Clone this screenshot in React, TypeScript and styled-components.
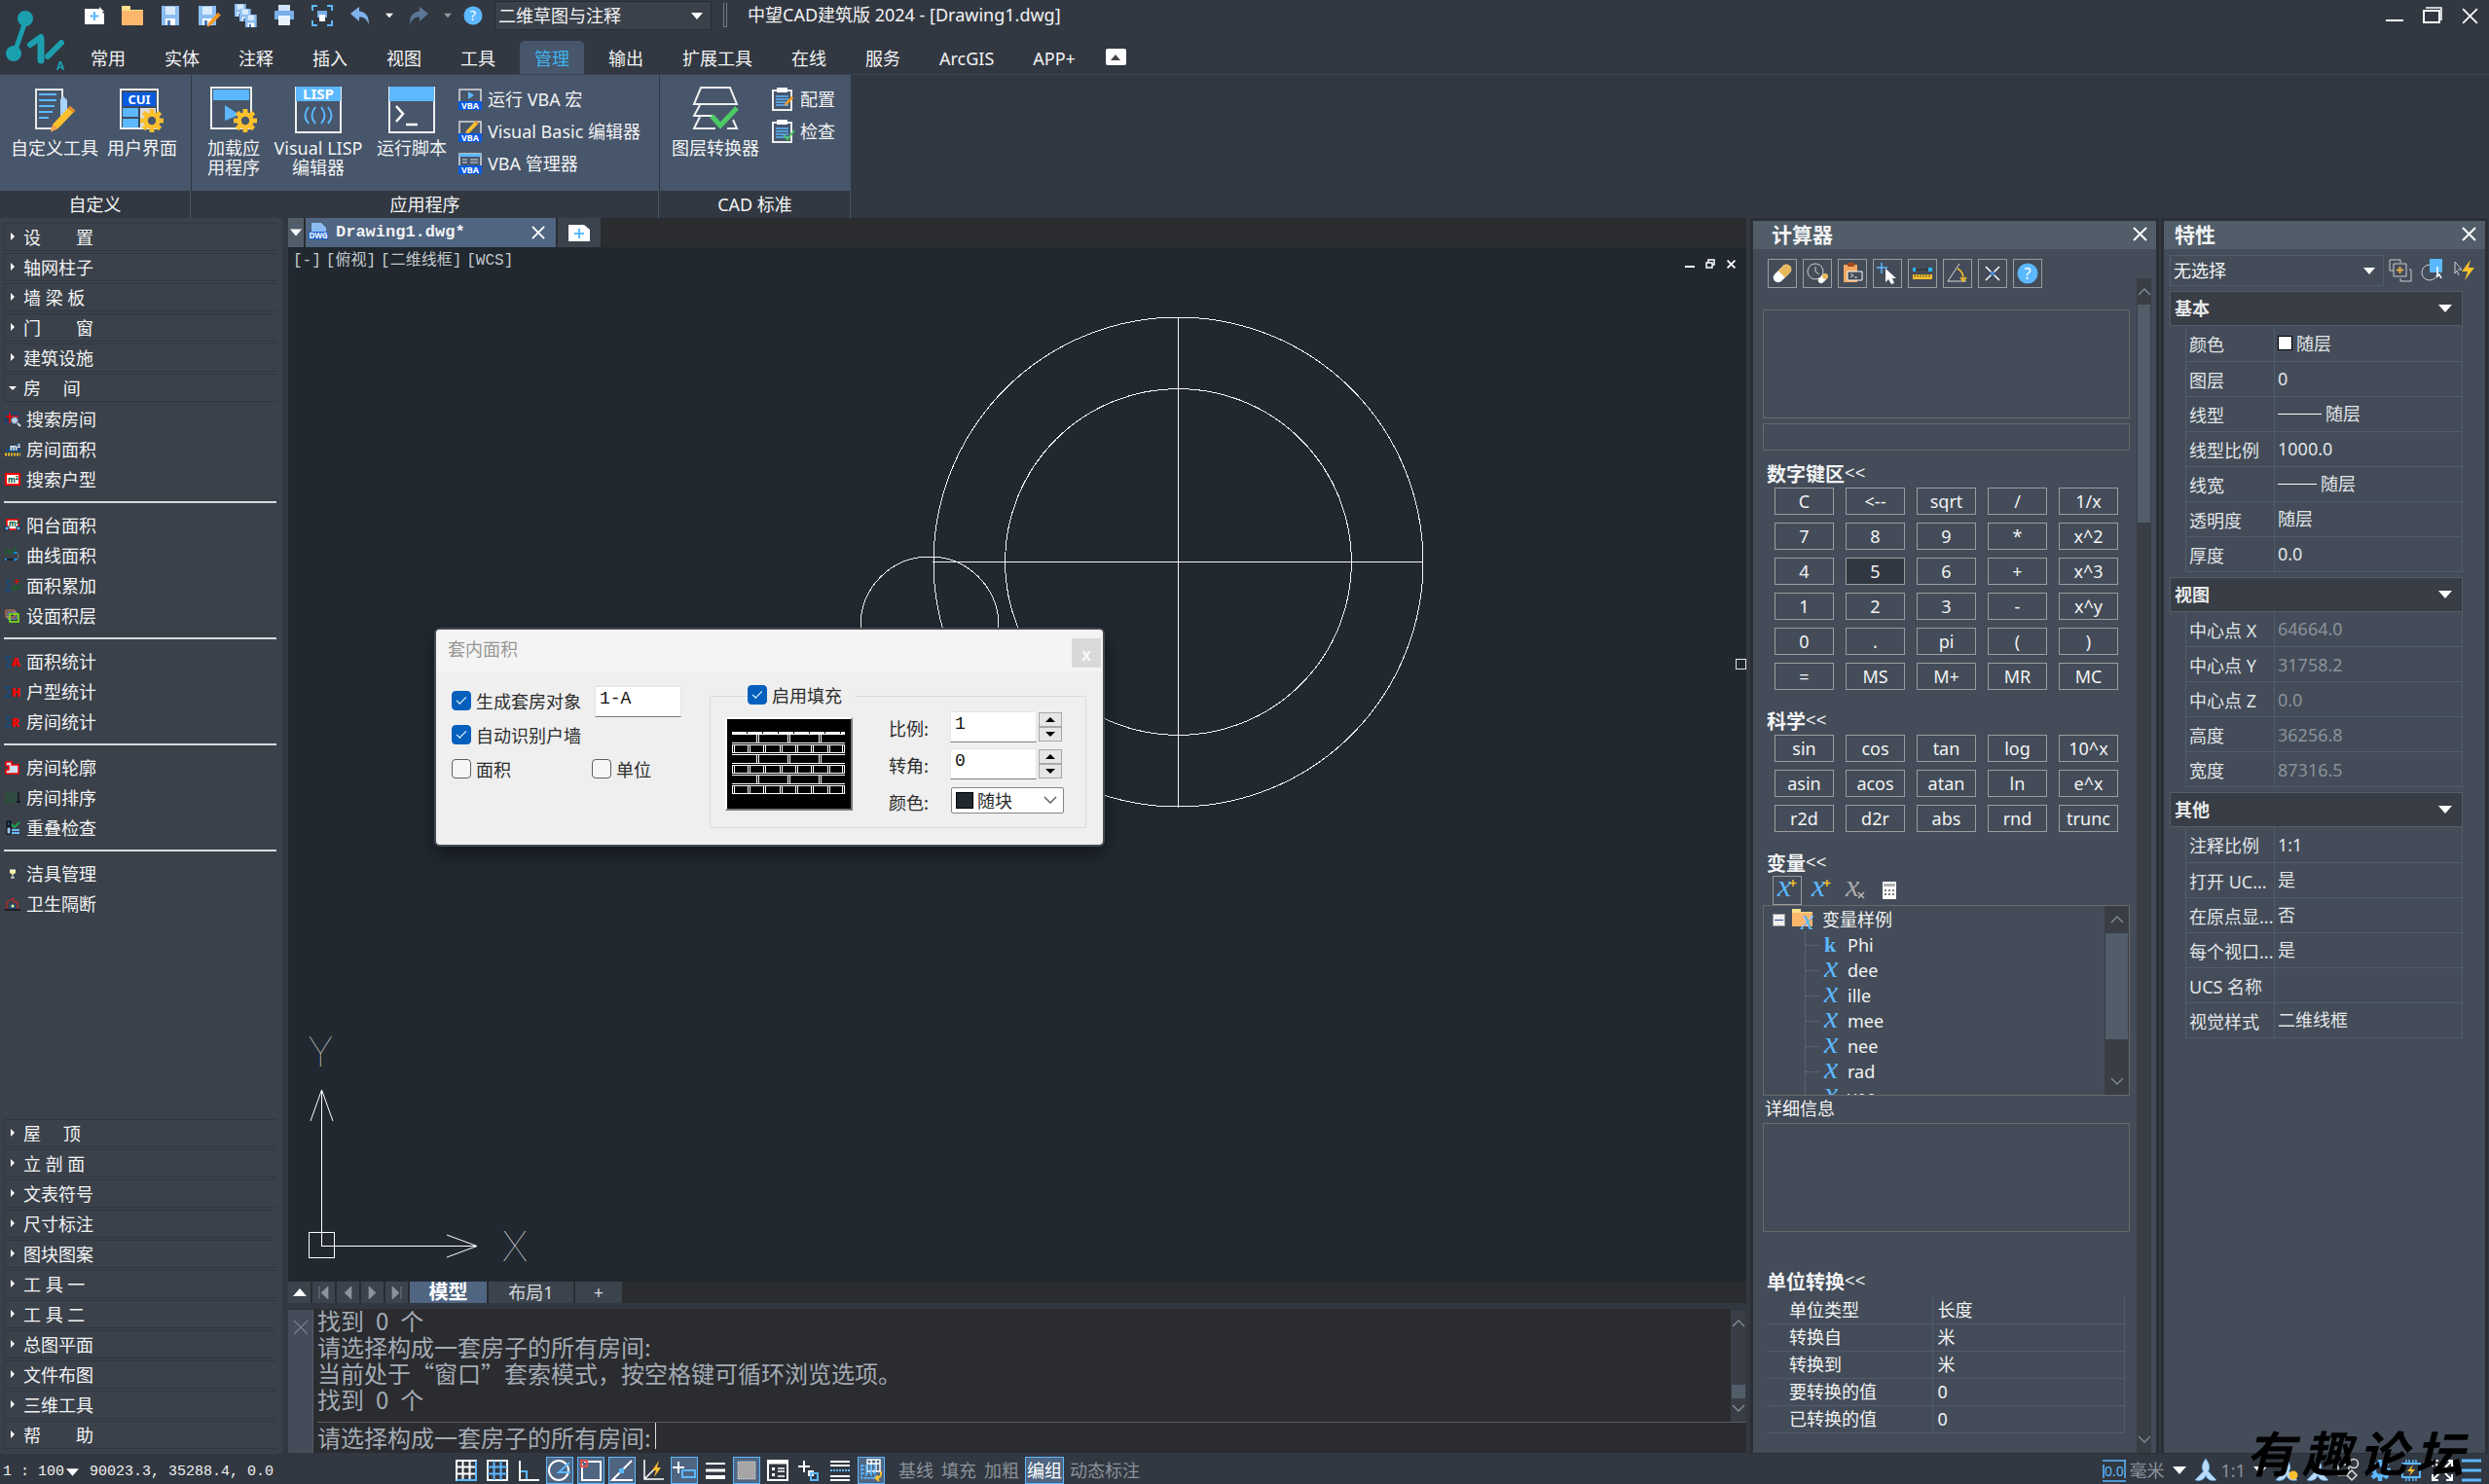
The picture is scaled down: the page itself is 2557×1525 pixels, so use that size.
import React from "react";
import styled, { createGlobalStyle, css } from "styled-components";

const ui = `"Noto Sans", "Noto Sans CJK SC", sans-serif`;
const song = `"Liberation Mono", "Noto Sans CJK SC", monospace`;

const c = {
  chrome: "#323841",
  ribbon: "#47566b",
  side: "#3a414a",
  panel: "#434c58",
  title: "#515d68",
  dark: "#2b2c30",
  edge: "#2b2e34",
  canvas: "#212830",
  blue: "#5cb8ff",
  line: "#515d68",
  text: "#f2f3f4",
  dim: "#8b929b",
  yellow: "#fbc02d",
};

const Global = createGlobalStyle`
  * { box-sizing: border-box; }
  body { margin: 0; background: ${c.chrome}; color: ${c.text}; font: 18px/20px ${ui}; overflow: hidden; }
  button, input, select { font: inherit; color: inherit; margin: 0; padding: 0; border: 0; background: none; border-radius: 0; }
  svg { display: block; flex: none; overflow: visible; }
  h2, h3, ul, fieldset { margin: 0; padding: 0; border: 0; font: inherit; }
  ul { list-style: none; }
  table { border-collapse: collapse; }
`;

/* ---------- frame ---------- */
const App_ = styled.div`display: flex; flex-direction: column; height: 100vh;`;
const Body = styled.div`display: flex; flex: 1; min-height: 0; padding-right: 1px;`;
const Center = styled.main`display: flex; flex-direction: column; flex: 1; min-width: 0; margin: 0 4px 0 6px;`;

/* ---------- header ---------- */
const Header = styled.header`display: flex; height: 76px;`;
const LogoBtn = styled.button`width: 72px; background: #303740; display: grid; place-items: center;`;
const HeadCol = styled.div`flex: 1; padding-left: 5px;`;
const TitleRow = styled.div`display: flex; height: 42px; align-items: flex-start;`;
const Quick = styled.button<{ $w?: number }>`width: ${p => p.$w ?? 39}px; height: 32px; display: grid; place-items: center;`;
const Combo = styled.div<{ $w?: string }>`
  position: relative; width: ${p => p.$w ?? "auto"};
  select { appearance: none; width: 100%; height: 100%; padding-left: 3px; outline: none; }
  &::after { content: ""; position: absolute; right: 8px; top: 50%; margin-top: -3px; border: 6px solid transparent; border-top: 7px solid #fff; border-bottom: 0; pointer-events: none; }
`;
const WorkCombo = styled(Combo)`height: 30px; margin: 1px 12px 0 6px; border: 1px solid #262b31; background: #3a414a;`;
const Grip = styled.div`width: 4px; height: 25px; margin: 3px 21px 0 0; border: 1px solid #757a80; border-top: 0;`;
const AppTitle = styled.div`flex: 1; line-height: 30px;`;
const WinBtns = styled.div`display: flex;`;
const Tabs = styled.nav`display: flex; gap: 10px; height: 34px; padding-left: 1px;`;
const Tab = styled.button<{ $on?: boolean }>`
  height: 34px; padding: 2px 15px 0; border-radius: 5px 5px 0 0; white-space: nowrap;
  ${p => p.$on && css`background: ${c.ribbon}; color: #3fb4f0;`}
`;
const Collapse = styled.button`
  width: 21px; height: 17px; margin: 8px 0 0 6px; background: #fff; border-radius: 2px; display: grid; place-items: center;
`;

const Ribbon = styled.div`display: flex; height: 148px; border-top: 1px solid #3c4653;`;
const Group = styled.section<{ $w: number }>`width: ${p => p.$w}px; display: flex; flex-direction: column; border-right: 1px solid ${c.chrome}; background: ${c.ribbon};`;
const GroupBody = styled.div`display: flex; flex: 1; padding: 12px 0 0 11px;`;
const GroupName = styled.h2`height: 28px; line-height: 29px; text-align: center; background: ${c.chrome}; border-right: 1px solid ${c.ribbon};`;
const Big = styled.button<{ $w: number }>`
  width: ${p => p.$w}px; height: 100px; display: flex; flex-direction: column; align-items: center; gap: 5px; white-space: nowrap;
`;
const SmallCol = styled.div<{ $gap: number }>`display: flex; flex-direction: column; padding-left: ${p => p.$gap}px;`;
const Small = styled.button`display: flex; align-items: center; gap: 6px; height: 33px; padding-bottom: 8px; white-space: nowrap;`;

/* ---------- left menu ---------- */
const Side = styled.nav`width: 290px; background: ${c.side}; padding: 5px 6px 3px 4px; display: flex; flex-direction: column;`;
const Fold = styled.button<{ $open?: boolean }>`
  display: flex; align-items: center; width: 280px; height: 29px; margin-bottom: 2px; padding: 0 0 0 19px !important; white-space: pre; position: relative;
  border: 1px solid #313740 !important; border-right: 0 !important;
  &::before { content: ""; position: absolute; left: 6px; top: 9px; border: 4px solid transparent; border-left-color: #fff; border-right: 0;
    ${p => p.$open && css`left: 4px; top: 12px; border: 4px solid transparent; border-top-color: #fff; border-bottom: 0;`} }
`;
const Item = styled.button`display: flex; align-items: center; gap: 6px; height: 31px; padding-left: 1px; width: 280px;`;
const Rule = styled.hr`width: 280px; height: 2px; margin: 7px 0; border: 0; background: #d8dbde;`;
const Spacer = styled.div`flex: 1;`;

/* ---------- drawing area ---------- */
const DocTabs = styled.div`display: flex; height: 30px; background: ${c.dark}; gap: 2px;`;
const DocList = styled.button`width: 16px; background: ${c.title}; display: grid; place-items: center;`;
const DocTab = styled.div`
  width: 257px; background: #4f6582; display: flex; align-items: center; gap: 8px; padding: 0 11px 0 3px; font: bold 17px/28px ${song};
  span { flex: 1; }
`;
const NewTab = styled.button`width: 44px; background: #3b434d; display: grid; place-items: center;`;
const Canvas = styled.div`position: relative; flex: 1; min-height: 0; background: ${c.canvas}; overflow: hidden;`;
const Drawing = styled.svg`position: absolute; inset: 0; width: 100%; height: 100%; fill: none; stroke: #f4f4f4; shape-rendering: crispEdges;`;
const Ucs = styled.svg`position: absolute; left: 16px; bottom: 16px; fill: none; stroke: #fff;
  text { fill: #fff; stroke: none; font: 100 43px Lato, sans-serif; }`;
const ViewBar = styled.div`position: relative; display: flex; gap: 5px; padding: 3px 8px 0 5px; font: 16px/20px ${song}; color: #c4c8cc;`;
const MdiBtns = styled.div`display: flex; margin: 6px 0 0 auto; gap: 5px; height: 16px; button { width: 16px; display: grid; place-items: center; }`;
const PickBox = styled.div`position: absolute; right: 0; top: 423px; width: 11px; height: 11px; border: 1px solid #e8e8e8;`;

const LayoutTabs = styled.div`display: flex; gap: 2px; height: 22px; background: ${c.dark};`;
const Arrow = styled.button`width: 23px; background: #3b434d; display: grid; place-items: center;`;
const LayoutTab = styled.button<{ $w: number; $on?: boolean }>`
  width: ${p => p.$w}px; font-size: 18px; line-height: 20px; background: #3b434d; color: #d5d8db;
  ${p => p.$on && css`background: #4f6582; color: #fff; font-weight: bold; font-size: 20px;`}
`;
const Command = styled.section`display: flex; height: 148px; margin: 6px 0 1px; background: ${c.dark}; border-top: 1px solid ${c.edge};
  font: 24px/27px "Noto Sans CJK SC", sans-serif; color: #a3abb4;`;
const CommandGrip = styled.div`width: 26px; background: #444b59; border-right: 1px solid #535b68; padding: 2px 5px;`;
const CommandCol = styled.div`flex: 1; display: flex; flex-direction: column; padding-left: 4px;`;
const History = styled.div`display: flex; height: 116px; border-bottom: 1px solid #55585c; ul { flex: 1; margin-top: -3px; }`;
const Line = styled.li`display: flex; gap: 12px;`;
const Prompt = styled.div`display: flex; align-items: stretch; flex: 1;
  label { line-height: 30px; }
  input { flex: 1; height: 27px; border-left: 1px solid #ddd; outline: none; margin-left: 4px; }`;

/* ---------- dialog ---------- */
const Dialog = styled.section`
  position: absolute; left: 152px; top: 393px; width: 685px; height: 221px; border-radius: 4px; overflow: hidden;
  background: #efefef; color: #2c2c2c; box-shadow: 0 0 0 2px #454b52, 0 8px 20px #0008; font: 18px/20px "Noto Sans CJK SC", sans-serif;
`;
const DlgTitle = styled.div`display: flex; justify-content: space-between; height: 43px; padding: 9px 2px 0 12px; background: #f4f4f4; color: #979797;
  button { width: 30px; height: 30px; background: #d9d9d9; color: #f8f8f8; font-weight: bold; }
  h2 { line-height: 21px; }`;
const DlgBody = styled.div`display: flex; padding: 12px 16px 0;`;
const DlgLeft = styled.div`width: 265px; display: grid; grid-template-columns: 144px 1fr; grid-template-rows: 36px 34px 36px; align-items: center;`;
const Check = styled.label<{ $wide?: boolean }>`
  display: flex; align-items: center; gap: 5px; white-space: nowrap; ${p => p.$wide && css`grid-column: span 2;`}
  input { appearance: none; width: 20px; height: 20px; border: 1px solid #5f5f5f; border-radius: 4px; background: #f6f6f6; display: grid; place-items: center; }
  input:checked { background: #0560bd; border-color: #0560bd; }
  input:checked::before { content: ""; width: 9px; height: 4px; margin-bottom: 3px; border: solid #fff; border-width: 0 0 1px 1px; transform: rotate(-45deg); }
`;
const Box = styled.input`
  width: 89px; height: 32px; padding: 0 4px 6px !important; background: #fff; border: 1px solid #e4e4e4 !important; border-bottom-color: #7d7d7d !important; outline: none;
  font: 18px/20px ${song} !important; color: #111 !important;
`;
const Code = styled.div`padding: 2px 0 0 3px;`;
const Fill = styled.fieldset`position: relative; width: 387px; height: 136px; margin-top: 13px; border: 1px solid #dadada !important; display: flex; padding: 0 0 0 15px !important;`;
const FillCheck = styled.div`position: absolute; left: 38px; top: -12px; padding-right: 14px; background: #efefef;`;
const Preview = styled.button`width: 131px; height: 96px; margin-top: 21px; background: #000; border: 2px solid #fff !important; border-right-color: #777 !important; border-bottom-color: #777 !important; padding: 0 5px;`;
const Fields = styled.div`margin: 15px 0 0 37px; display: grid; grid-template-columns: 63px 1fr; grid-auto-rows: 38px; align-items: start; label { padding-top: 7px; }`;
const Spin = styled.div`display: flex; gap: 2px;
  div { display: flex; flex-direction: column; padding-top: 1px; }
  button { width: 24px; height: 15px; border: 1px solid #a8a8a8; background: #e6e6e6; display: grid; place-items: center; }`;
const ColorPick = styled.div`position: relative; width: 116px; height: 27px; margin: 2px 0 0 1px; background: #fff; border: 1px solid #868686; border-radius: 2px;
  select { appearance: none; width: 100%; height: 24px; padding-left: 26px; outline: none; }
  i { position: absolute; left: 4px; top: 4px; width: 18px; height: 17px; background: ${c.canvas}; border: 1px solid #000; }
  svg { position: absolute; right: 7px; top: 9px; }`;

/* ---------- palettes ---------- */
const Palette = styled.aside<{ $w: number }>`width: ${p => p.$w}px; flex: none; background: ${c.panel}; border: 3px solid ${c.edge}; border-bottom-width: 1px; margin-right: ${p => (p.$w > 400 ? 2 : 0)}px; display: flex; flex-direction: column;`;
const PalTitle = styled.div<{ $pad: number }>`display: flex; justify-content: space-between; align-items: flex-start; height: 29px; flex: none; background: ${c.title}; padding: 0 9px 0 ${p => p.$pad}px;
  h2 { font: bold 21px/26px "Noto Sans CJK SC", sans-serif; }
  button { height: 26px; display: grid; place-items: center; }`;
const CalcBody = styled.div`display: flex; flex: 1; min-height: 0;`;
const CalcMain = styled.div`width: 394px; padding: 10px 7px 0 10px;`;
const Tools = styled.div`display: flex; gap: 6px; padding-left: 5px;`;
const Tool = styled.button<{ $flat?: boolean }>`width: 30px; height: 30px; border: 1px solid ${p => (p.$flat ? "transparent" : "#9b9d9f")}; display: grid; place-items: center;`;
const Display = styled.textarea<{ $top?: number; $h: number }>`display: block; width: 100%; height: ${p => p.$h}px; margin: ${p => p.$top ?? 0}px 0 0; padding: 0; background: none; border: 1px solid #68696a; resize: none; outline: none;`;
const Entry = styled.input`display: block; width: 100%; height: 28px; margin-top: 5px !important; border: 1px solid #68696a !important; outline: none;`;
const Head = styled.button<{ $top: number }>`display: flex; height: 26px; margin: ${p => p.$top}px 0 0 4px; font: bold 20px/26px "Noto Sans CJK SC", sans-serif; span { font: 18px/26px "Liberation Mono", monospace; }`;
const Keys = styled.div`display: grid; grid-template-columns: repeat(5, 61px); gap: 8px 12px; padding: 1px 0 0 12px;`;
const Key = styled.button<{ $on?: boolean }>`height: 28px; border: 1px solid #9b9d9f; background: ${p => (p.$on ? "#313740" : "none")};`;
const VarTools = styled.div`display: flex; gap: 5px; padding-left: 10px; height: 30px;`;
const Tree = styled.div`display: flex; height: 196px; border: 1px solid #68696a; overflow: hidden;`;
const TreeList = styled.ul`flex: 1; position: relative; padding: 1px 0 0 9px;
  &::before { content: ""; position: absolute; left: 42px; top: 26px; bottom: 0; border-left: 1px dotted #6b737d; }`;
const Root = styled.li`display: flex; align-items: center; gap: 7px; height: 26px;`;
const Leaf = styled.li`display: flex; align-items: center; height: 26px; padding-left: 34px; gap: 4px;
  &::before { content: ""; width: 14px; border-top: 1px dotted #6b737d; }
  span { margin-left: 3px; }`;
const Minus = styled.button`width: 13px; height: 13px; background: #f0f0f0; border: 1px solid #999 !important; display: grid; place-items: center; &::before { content: ""; width: 9px; height: 1px; background: #2a4fa0; }`;
const Caption = styled.div`padding: 3px 0 0 2px; height: 28px;`;
const Scroll = styled.div<{ $w: number; $top?: number }>`width: ${p => p.$w}px; margin-top: ${p => p.$top ?? 0}px; background: #393d45; display: flex; flex-direction: column; align-items: center; padding: 10px 1px;`;
const Thumb = styled.div<{ $h: number; $top: number }>`width: 100%; height: ${p => p.$h}px; margin: ${p => p.$top}px 0 auto; background: ${c.title};`;
const Units = styled.table`width: 367px; margin: 2px 0 0 5px; table-layout: fixed;
  th, td { height: 28px; padding: 0; text-align: left; font-weight: normal; border-bottom: 1px solid ${c.line}; }
  th { width: 169px; padding-left: 22px; }
  td { padding-left: 5px; border-left: 1px solid ${c.line}; border-right: 1px solid ${c.line}; }`;

const SelRow = styled.div`display: flex; align-items: center; gap: 9px; padding: 5px 9px 5px 6px; height: 43px;
  button { width: 24px; height: 24px; display: grid; place-items: center; }`;
const SelCombo = styled(Combo)`flex: 1; height: 32px; border: 1px solid ${c.line}; margin-right: -4px;`;
const Section = styled.section`margin: 0 23px 5px 6px;`;
const SecHead = styled.button`display: flex; justify-content: space-between; align-items: center; width: 100%; height: 36px; padding: 0 10px 0 4px !important; background: #393d45; border: 1px solid ${c.line} !important; font-weight: bold !important; color: #e8eaec;`;
const Props = styled.table`width: calc(100% - 16px); margin-left: 16px; table-layout: fixed; color: #e2e5e8;
  th, td { height: 36px; padding: 0 0 0 3px; text-align: left; font-weight: normal; border: 1px solid ${c.line}; border-top: 0; white-space: nowrap; }
  th { width: 91px; padding-top: 3px; }
  td { line-height: 22px; }
  td div { display: flex; align-items: center; gap: 4px; }`;
const Swatch = styled.i`width: 15px; height: 15px; background: #fff; border: 1px solid #000;`;
const Stroke = styled.i<{ $w: number }>`width: ${p => p.$w}px; height: 1px; background: #fff;`;
const Dim = styled.span`color: ${c.dim};`;

/* ---------- status bar ---------- */
const Status = styled.footer`position: relative; display: flex; align-items: center; height: 31px; padding: 3px 8px 0 3px; color: ${c.dim};`;
const Coords = styled.div`display: flex; align-items: center; width: 462px; padding-top: 3px; font: 15px/26px ${song}; color: #f0f0f0; white-space: pre; button { display: flex; align-items: center; gap: 2px; margin-right: 11px; }`;
const Toggle = styled.button<{ $on?: boolean }>`width: 28px; height: 28px; margin-right: 4px; display: grid; place-items: center; border: 1px solid transparent; ${p => p.$on && css`background: #4f6582; border-color: ${c.blue};`}`;
const Word = styled.button<{ $on?: boolean }>`height: 28px; padding: 0 1px; border: 1px solid transparent; ${p => p.$on && css`background: #4f6582; border-color: ${c.blue}; color: #fff;`}`;
const Words = styled.div`display: flex; padding-left: 8px; margin-right: auto; gap: 4px;`;
const Tray = styled.div`display: flex; align-items: center; gap: 8px; span { display: flex; align-items: center; gap: 4px; }`;
const Stamp = styled.div`position: absolute; right: 26px; bottom: 6px; display: flex; gap: 8px; font: italic bold 50px/56px "Noto Sans CJK SC", sans-serif; color: #000; pointer-events: none;`;

/* ---------- icons ---------- */
type IP = { w?: number; h?: number; vb?: string; children: React.ReactNode };
const I = ({ w = 24, h = w, vb, children }: IP) => (
  <svg width={w} height={h} viewBox={vb ?? `0 0 ${w} ${h}`} fill="none" aria-hidden="true">{children}</svg>
);
const Cross = ({ s = 15, k = 2, col = "#fff" }) => <I w={s} vb="0 0 15 15"><path d="M1 1 14 14M14 1 1 14" stroke={col} strokeWidth={k} /></I>;
const Down = ({ w = 14, col = "#fff" }) => <I w={w} h={8} vb="0 0 14 8"><path d="M0 0H14L7 8Z" fill={col} /></I>;
const Chev = ({ up = false, col = "#858d96" }) => <I w={12} h={7}><path d={up ? "M0 7 6 1 12 7" : "M0 0 6 6 12 0"} stroke={col} strokeWidth="1.3" /></I>;
const Disk = ({ x = 2, y = 2, s = 1 }) => (
  <g transform={`translate(${x} ${y}) scale(${s})`}><path d="M0 0H18V20H0Z" fill="#8cbdf2" /><path d="M4 1H14V9H4Z" fill="#d9eafc" /><path d="M4 13H14V20H4Z" fill="#fff" /><path d="M6 15h3v5H6Z" fill="#4577b5" /></g>
);
const HelpIc = ({ s = 22 }) => <I w={s} vb="0 0 22 22"><circle cx="11" cy="11" r="10.5" fill={c.blue} /><text x="11" y="16.5" textAnchor="middle" fontSize="16" fill="#fff" fontFamily="Noto Sans">?</text></I>;
const Gear = ({ x, y, r, col = c.yellow, hole }: { x: number; y: number; r: number; col?: string; hole: string }) => (
  <g transform={`translate(${x} ${y})`}>{[0, 45, 90, 135].map(a => <rect key={a} x={-r * 0.2} y={-r} width={r * 0.4} height={r * 2} fill={col} transform={`rotate(${a})`} />)}<circle r={r * 0.72} fill={col} /><circle r={r * 0.35} fill={hole} /></g>
);
const Undo = ({ flip = false, col = "#7fb2ea" }) => <I w={22} h={20}><g transform={flip ? "translate(22 0) scale(-1 1)" : ""}><path d="M1 8 10 1V5.500C17 6 20 11 20 19 17 13 15 11.500 10 11.500V16Z" fill={col} /></g></I>;
const Logo = () => (
  <I w={68} h={72}><g stroke="#1c9fae" strokeLinecap="round"><path d="M24 20 13 52" strokeWidth="5" /><path d="M40 38V60" strokeWidth="7" /><path d="M29 44 40 36" strokeWidth="6" /><path d="M47 56 61 42" strokeWidth="6" /></g><circle cx="24" cy="17" r="8" fill="#1c9fae" /><circle cx="12" cy="53" r="8" fill="#1c9fae" /><text x="56" y="70" fontSize="12" fontWeight="bold" fill="#1c9fae" fontFamily="Noto Sans">A</text></I>
);
const Pencil = ({ x, y, s = 1, col = c.yellow }: { x: number; y: number; s?: number; col?: string }) => (
  <g transform={`translate(${x} ${y}) scale(${s})`}><path d="M0 24 2 17 18 0 23 4 7 21Z" fill={col} /><path d="M0 24 2 17 7 21Z" fill="#f0a050" /><path d="M16 2 18 0 23 4 21 6Z" fill="#e08a2c" /></g>
);
const big = {
  tool: <I w={48}><path d="M32 12V3H5V43H22" stroke="#e8e8e8" strokeWidth="2" /><path d="M8 8H26M8 14H26M8 20H24M8 26H22M8 32H18" stroke={c.blue} strokeWidth="2" /><path d="M33 10 37 14V26L30 32V13Z" fill="#a8d4fa" /><g transform="translate(20 20)"><Pencil x={0} y={0} s={1.1} /></g></I>,
  cui: <I w={48}><path d="M2 3H40V43H2Z" fill="#3d4b5e" stroke="#eee" strokeWidth="2" /><path d="M4 6H38V20H4Z" fill="#0a5be0" /><text x="21" y="18" textAnchor="middle" fontSize="13" fontWeight="bold" fill="#fff" fontFamily="Noto Sans">CUI</text><path d="M4 22H20V31H4ZM4 33H20V42H4Z" fill={c.blue} /><path d="M22 22H38V42H22Z" fill="#ddd" /><Gear x={34} y={35} r={12} hole="#47566b" /></I>,
  load: <I w={48}><path d="M1 1H42V43H1Z" stroke="#eee" strokeWidth="2" /><path d="M3 3H40V14H3Z" fill={c.blue} /><path d="M15 19 30 29 15 35Z" fill={c.blue} /><Gear x={36} y={35} r={12} hole="#47566b" /></I>,
  lisp: <I w={48}><path d="M1 1H47V47H1Z" stroke="#eee" strokeWidth="2" /><path d="M1 0H47V15H1Z" fill={c.blue} /><text x="24" y="13" textAnchor="middle" fontSize="15" fontWeight="bold" fill="#fff" fontFamily="Noto Sans">LISP</text><path d="M14 21q-7 9 0 17M21 21q-7 9 0 17M27 21q7 9 0 17M34 21q7 9 0 17" stroke={c.blue} strokeWidth="2" /></I>,
  script: <I w={48}><path d="M1 1H47V47H1Z" stroke="#eee" strokeWidth="2" /><path d="M1 0H47V15H1Z" fill={c.blue} /><path d="M8 20 15 28 8 36M18 39H30" stroke="#fff" strokeWidth="2.500" /></I>,
  layer: <I w={48}><g stroke="#eee" strokeWidth="2"><path d="M9 1H39L46 18H2Z" /><path d="M8 19 2 30H22M8 31 2 43H24M36 43H46L42 34" /></g><path d="M20 30 29 40 46 22" stroke="#4ccb64" strokeWidth="5" /></I>,
};
const vba = (top: React.ReactNode) => <I w={24} h={22}><path d="M1 1H23V14H1Z" stroke="#ddd" strokeWidth="1.500" />{top}<path d="M0 13H24V22H0Z" fill="#0a5be0" /><text x="12" y="21" textAnchor="middle" fontSize="9" fontWeight="bold" fill="#fff" fontFamily="Noto Sans">VBA</text></I>;
const clip = (mark: React.ReactNode) => <I w={24}><path d="M2 3H21V23H2Z" stroke="#eee" strokeWidth="2" /><path d="M6 0H17V5H6Z" fill="#fff" /><path d="M5 9H18M5 12H18M5 15H18M5 18H18" stroke={c.blue} strokeWidth="1.500" />{mark}</I>;

const sum = (l: string) => <I w={16}><path d="M7 3H1L5 8 1 13H7" stroke="#174a7e" strokeWidth="1.500" /><text x="7" y="13" fontSize="12" fontWeight="900" fill="#f00" fontFamily="Noto Sans">{l}</text></I>;
const m2 = (x: number, y: number, f: string, s = 8) => <text x={x} y={y} fontSize={s} fontWeight="bold" fill={f} fontFamily="Noto Sans">m²</text>;
const sideIc: Record<string, React.ReactNode> = {
  搜索房间: <I w={16}><path d="M0 1H14V12H0Z" stroke="#174a7e" fill="#2b3c55" /><path d="M1 5H14M5 1V12" stroke="#f00" strokeWidth="1.500" /><circle cx="10" cy="9" r="3.500" fill="#b7d0e8" stroke="#667" /><path d="M13 12 16 15" stroke="#ddd" strokeWidth="2" /></I>,
  房间面积: <I w={16}><path d="M1 8 16 1V10H1Z" fill="#174a7e" />{m2(5, 9, "#fff")}<path d="M0 13H16" stroke="#e8b830" strokeWidth="3" strokeDasharray="2 1" /></I>,
  搜索户型: <I w={16}><path d="M1 2H15V13H1Z" fill="#fff" stroke="#f00" strokeWidth="2" />{m2(3, 11, "#053")}</I>,
  阳台面积: <I w={16}><path d="M2 2H14V12H2Z" fill="#fff" stroke="#f00" strokeWidth="1.500" />{m2(4, 9, "#053")}<path d="M0 9H4V13H0ZM12 9H16V13H12Z" fill="#6ab0f0" stroke="#123" /></I>,
  曲线面积: <I w={16}>{m2(0, 7, "#17622a", 9)}<path d="M1 12H11" stroke="#000" /><path d="M0 11h2v2H0ZM9 4h3v2H9ZM9 11h3v2H9Z" fill="#0a8cff" /><path d="M12 4q4 4 0 8" stroke="#ccc" strokeDasharray="1 1" /></I>,
  面积累加: <I w={16}><path d="M7 3H1L5 8 1 13H7" stroke="#174a7e" strokeWidth="1.500" />{m2(7, 13, "#17622a")}<path d="M12 1V6M10 3.500H15" stroke="#f00" /></I>,
  设面积层: <I w={16}><path d="M1 2H10V9H1Z" stroke="#f08050" /><path d="M3 4H12V11H3Z" stroke="#8fa0c0" /><path d="M5 6H14V14H5Z" stroke="#7cf010" strokeWidth="1.500" /></I>,
  面积统计: sum("A"), 户型统计: sum("H"), 房间统计: sum("R"),
  房间轮廓: <I w={16}><path d="M1 2H7V5H14V14H1V10H4V6H1Z" fill="#cfe2f7" stroke="#f00" strokeWidth="1.500" /></I>,
  房间排序: <I w={16}><text x="0" y="7" fontSize="7" fill="#17622a" fontFamily="Liberation Mono">001</text><text x="0" y="13" fontSize="7" fill="#17622a" fontFamily="Liberation Mono">002</text><path d="M14 2V13M12 11 14 13 16 11" stroke="#000" /></I>,
  重叠检查: <I w={16}><path d="M2 1H6V6H2Z" fill="#246" stroke="#000" /><path d="M2 7H6V14H2Z" fill="#9cc8f5" stroke="#000" /><path d="M7 4 10 7 15 2" stroke="#1c9f50" strokeWidth="2" /><path d="M7 10H15M7 13H15" stroke="#6ab8f5" strokeWidth="2" /></I>,
  洁具管理: <I w={16}><path d="M5 4H11V7L8 9 5 7Z" fill="#f5f0a0" /><path d="M5 4H11M8 9V12M6 12H10" stroke="#fff" /></I>,
  卫生隔断: <I w={16}><path d="M2 13V6L9 2V6H13V13" stroke="#d22" /><path d="M5 8H11V13H5Z" fill="#174a7e" /><circle cx="8" cy="10" r="1.500" fill="#ff8" /><path d="M0 14H16" stroke="#000" /></I>,
};

const Person = ({ dot = false }) => <I w={24}><path d="M12 0Q18 8 14.500 13L23 22Q14 24 12 17 10 24 1 22L9.500 13Q6 8 12 0Z" fill="#b9daf8" stroke={c.blue} strokeWidth=".6" />{dot && <circle cx="19" cy="17" r="4.500" fill={c.yellow} />}</I>;
const grid = (a: string, b: string) => <I w={22}><path d="M1 1H21V21H1Z" stroke={a} strokeWidth="2" /><path d="M7.500 1V21M14.500 1V21M1 7.500H21M1 14.500H21" stroke={b} strokeWidth="2" /></I>;
const W = "#fff";
const toggles: [string, boolean, React.ReactNode][] = [
  ["捕捉", false, <I w={22}><path d="M1 1H21V21H1ZM7.500 1V21M14.500 1V21M1 7.500H21M1 14.500H21" stroke={W} strokeWidth="2" /><path d="M21 1V21H1" stroke={c.blue} strokeWidth="2" /></I>],
  ["栅格", false, grid(W, c.blue)],
  ["正交", false, <I w={22}><path d="M2 1V21H22" stroke={W} strokeWidth="2" /><path d="M3 12H9V20" stroke={c.blue} strokeWidth="2" /></I>],
  ["极轴", true, <I w={24}><circle cx="11" cy="12" r="10" stroke={W} strokeWidth="2" /><path d="M22 4 11 14H23" stroke={c.blue} strokeWidth="2" /></I>],
  ["对象捕捉", true, <I w={24}><path d="M5 3H22V22H3V5" stroke={W} strokeWidth="2" /><path d="M2 2H8V8H2Z" stroke="#e05050" strokeWidth="2" /></I>],
  ["对象追踪", true, <I w={24}><path d="M23 22H2L22 2" stroke={W} strokeWidth="2" /><path d="M9 10H14V15H9Z" fill={c.blue} /></I>],
  ["动态 UCS", false, <I w={24}><path d="M3 1V21H23M3 21 15 9" stroke={W} strokeWidth="1.500" /><path d="M18 2 11 12H15L13 19 20 9H16Z" fill={c.yellow} /></I>],
  ["动态输入", true, <I w={24}><path d="M6 3V15M0 9H12" stroke={W} strokeWidth="2" /><path d="M10 12H23V19H10Z" stroke={c.blue} strokeWidth="2" /></I>],
  ["线宽", false, <I w={20}><path d="M0 3H20" stroke={W} strokeWidth="2" /><path d="M0 10H20" stroke={W} strokeWidth="3" /><path d="M0 17H20" stroke={W} strokeWidth="4" /></I>],
  ["透明度", true, <I w={20}><path d="M1 1H19V19H1Z" fill="#a5a5a5" stroke="#ddd" strokeDasharray="1 1" /></I>],
  ["快捷特性", false, <I w={22}><path d="M1 1H21V21H1Z" stroke={W} strokeWidth="2" /><path d="M1 3H21" stroke={W} strokeWidth="3" /><path d="M5 8h3v3H5ZM5 14h3v3H5Z" fill={W} /><path d="M11 9H18M11 12H18M11 17H18" stroke={W} strokeWidth="1.500" /></I>],
  ["循环选择", false, <I w={22}><path d="M6 1V13M0 7H12" stroke={W} strokeWidth="2" /><path d="M10 11H16V17H10Z" fill={W} /><path d="M13 14H20V21H13Z" stroke={c.blue} strokeWidth="2" /></I>],
  ["注释监视", false, <I w={22}><path d="M1 2H21M1 6H21M1 17H21M1 21H21" stroke={W} strokeWidth="2" /><path d="M1 11H21" stroke={c.blue} strokeDasharray="2 1" strokeWidth="2" /></I>],
  ["表格", true, <I w={24}><path d="M8 1H21V13H8ZM8 5H21M12 1V13M17 1V13" stroke={W} strokeWidth="1.500" /><path d="M2 7H16V20H2ZM2 11H16M2 15H16M7 7V20M12 7V20" stroke={c.blue} strokeWidth="1.500" strokeDasharray="3 1" /><path d="M22 13Q23 20 17 20L19 17M17 20 20 23" stroke={c.yellow} strokeWidth="2" /></I>],
];

const calcTools: [string, React.ReactNode][] = [
  ["清除", <I w={22}><g transform="rotate(-45 11 11)"><rect x="0" y="6" width="22" height="10" rx="5" fill={W} /><path d="M10 6H18Q22 7 22 11 22 15 18 16H10Z" fill="#e8b85c" /></g></I>],
  ["清除历史", <I w={22}><circle cx="9" cy="9" r="8" stroke="#ccc" /><path d="M9 4V9L13 12" stroke="#ccc" /><g transform="rotate(-45 17 16)"><rect x="11" y="13" width="11" height="6" rx="3" fill={W} /><rect x="17" y="13" width="6" height="6" rx="3" fill="#e8b85c" /></g></I>],
  ["粘贴到命令行", <I w={22}><path d="M2 2H16V20H2Z" fill="#f2a862" /><path d="M6 0H13V4H6Z" fill="#a54a1a" /><path d="M6 9H21V18H6Z" fill={c.panel} stroke={W} /><path d="M9 11 12 13 9 15M13 15H16" stroke="#ddd" /></I>],
  ["拾取坐标", <I w={22}><path d="M5 0V11M0 5H11" stroke={c.blue} strokeWidth="1.500" /><path d="M9 6V20L12 17 15 22 18 21 16 16H20Z" fill={W} /></I>],
  ["两点距离", <I w={22}><path d="M3 7H19" stroke="#333" strokeDasharray="2 1" strokeWidth="2" /><path d="M1 5H4V9H1ZM17 5H21V9H17Z" fill="#27b4ff" /><path d="M1 12H21V17H1Z" fill={c.yellow} /><path d="M3 12V15M6 12V15M9 12V15M12 12V15M15 12V15M18 12V15" stroke="#553" /></I>],
  ["两点角度", <I w={22}><path d="M13 1 1 19H20" stroke="#ddd" /><path d="M11 6Q17 9 17 17M14 15 17 19 20 15" stroke={c.yellow} strokeWidth="1.500" /></I>],
  ["交点", <I w={16}><path d="M1 1 15 15M15 1 1 15" stroke={W} strokeWidth="1.500" /><path d="M6 6H10V10H6Z" fill="#4a90d8" /></I>],
  ["帮助", <HelpIc />],
];
const VarX = ({ col = c.blue, l = "x", s = 32 }) => <text x="1" y="17" fontSize={s} fontStyle={l === "x" ? "italic" : "normal"} fontWeight={l === "k" ? "bold" : "normal"} fill={col} fontFamily="Liberation Serif">{l}</text>;
const varIcs: React.ReactNode[] = [
  <I w={22}><VarX /><path d="M17 0V7M13.500 3.500H20.500" stroke={c.yellow} strokeWidth="1.500" /></I>,
  <I w={22}><VarX /><path d="M17 0V7M13.500 3.500H20.500" stroke={c.yellow} strokeWidth="1.500" /></I>,
  <I w={22}><VarX col="#aaa" /><path d="M14 13 20 19M20 13 14 19" stroke="#bbb" strokeWidth="1.500" /></I>,
  <I w={16} h={18}><path d="M1 0H15V18H1Z" fill={W} /><path d="M2 2H14V5H2Z" fill="#b0b0b0" /><path d="M3 9H13M3 13H13" stroke="#777" strokeWidth="2" strokeDasharray="2 2" /></I>,
];

/* ---------- data ---------- */
const tabs = ["常用", "实体", "注释", "插入", "视图", "工具", "管理", "输出", "扩展工具", "在线", "服务", "ArcGIS", "APP+"];
const foldsTop = ["设\u3000\u3000置", "轴网柱子", "墙 梁 板", "门\u3000\u3000窗", "建筑设施", "房\u3000 间"];
const foldsEnd = ["屋\u3000 顶", "立 剖 面", "文表符号", "尺寸标注", "图块图案", "工 具 一", "工 具 二", "总图平面", "文件布图", "三维工具", "帮\u3000\u3000助"];
const rooms = [["搜索房间", "房间面积", "搜索户型"], ["阳台面积", "曲线面积", "面积累加", "设面积层"], ["面积统计", "户型统计", "房间统计"], ["房间轮廓", "房间排序", "重叠检查"], ["洁具管理", "卫生隔断"]];
const numKeys = "C <-- sqrt / 1/x 7 8 9 * x^2 4 5 6 + x^3 1 2 3 - x^y 0 . pi ( ) = MS M+ MR MC".split(" ");
const sciKeys = "sin cos tan log 10^x asin acos atan ln e^x r2d d2r abs rnd trunc".split(" ");
const units = [["单位类型", "长度"], ["转换自", "米"], ["转换到", "米"], ["要转换的值", "0"], ["已转换的值", "0"]];
const sections: [string, [string, React.ReactNode][]][] = [
  ["基本", [["颜色", <div><Swatch />随层</div>], ["图层", "0"], ["线型", <div><Stroke $w={45} />随层</div>], ["线型比例", "1000.0"], ["线宽", <div><Stroke $w={40} />随层</div>], ["透明度", "随层"], ["厚度", "0.0"]]],
  ["视图", [["中心点 X", <Dim>64664.0</Dim>], ["中心点 Y", <Dim>31758.2</Dim>], ["中心点 Z", <Dim>0.0</Dim>], ["高度", <Dim>36256.8</Dim>], ["宽度", <Dim>87316.5</Dim>]]],
  ["其他", [["注释比例", "1:1"], ["打开 UC...", "是"], ["在原点显...", "否"], ["每个视口...", "是"], ["UCS 名称", ""], ["视觉样式", "二维线框"]]],
];
const history = ["找到 0 个", "请选择构成一套房子的所有房间:", "当前处于“窗口”套索模式，按空格键可循环浏览选项。", "找到 0 个"];

/* ---------- parts ---------- */
const TopBar = () => (
  <Header>
    <LogoBtn aria-label="应用菜单"><Logo /></LogoBtn>
    <HeadCol>
      <TitleRow>
        <Quick aria-label="新建"><I w={20} h={18}><path d="M0 2H14L20 7V18H0Z" fill={W} /><path d="M15 0 20 5H15Z" fill={W} /><path d="M10 5V14M5.500 9.500H14.500" stroke={c.blue} strokeWidth="2" /></I></Quick>
        <Quick aria-label="打开"><I w={22} h={20}><path d="M0 0H9V4H22V20H0Z" fill="#ffe08a" /><path d="M0 5H22V20H0Z" fill="#fcb76c" /></I></Quick>
        <Quick aria-label="保存"><I w={22} h={22}><Disk x={2} y={1} /></I></Quick>
        <Quick aria-label="另存为"><I w={22} h={22}><Disk x={1} y={1} /><Pencil x={10} y={8} s={0.6} col="#f59a23" /></I></Quick>
        <Quick aria-label="全部保存"><I w={24} h={24}><Disk x={0} y={0} s={0.65} /><Disk x={5} y={5} s={0.65} /><Disk x={11} y={11} s={0.65} /></I></Quick>
        <Quick aria-label="打印"><I w={22} h={22}><path d="M5 0H17V6H5Z" fill="#cfe4fa" /><path d="M1 6H21V15H1Z" fill="#79aee8" /><path d="M5 11H17V21H5Z" fill="#e8f2fd" /></I></Quick>
        <Quick aria-label="预览"><I w={22} h={22}><path d="M1 6V1H6M16 1H21V6M21 16V21H16M6 21H1V16" stroke={c.blue} strokeWidth="2" /><path d="M6 6H16V13H6Z" fill="#79aee8" /><path d="M8 10H14V17H8Z" fill={W} /></I></Quick>
        <Quick aria-label="放弃"><Undo /></Quick>
        <Quick $w={21} aria-label="放弃列表"><Down w={8} /></Quick>
        <Quick aria-label="重做"><Undo flip col="#5b7797" /></Quick>
        <Quick $w={21} aria-label="重做列表"><Down w={8} col="#999" /></Quick>
        <Quick $w={32} aria-label="帮助"><HelpIc s={20} /></Quick>
        <WorkCombo $w="223px"><select aria-label="工作空间"><option>二维草图与注释</option></select></WorkCombo>
        <Grip />
        <AppTitle>中望CAD建筑版 2024 - [Drawing1.dwg]</AppTitle>
        <WinBtns>
          <Quick aria-label="最小化"><I w={18} h={18}><path d="M0 14H18" stroke={W} strokeWidth="2" /></I></Quick>
          <Quick aria-label="还原"><I w={20} h={18}><path d="M1 4H17V16H1Z" stroke={W} strokeWidth="2" /><path d="M3 1H19V14" stroke={W} strokeWidth="1.500" /></I></Quick>
          <Quick aria-label="关闭"><Cross s={17} k={1.5} /></Quick>
        </WinBtns>
      </TitleRow>
      <Tabs>
        {tabs.map(t => <Tab key={t} $on={t === "管理"}>{t}</Tab>)}
        <Collapse aria-label="折叠功能区"><I w={10} h={6}><path d="M0 6H10L5 0Z" fill="#444" /></I></Collapse>
      </Tabs>
    </HeadCol>
  </Header>
);

const RibbonBar = () => (
  <Ribbon>
    <Group $w={197}>
      <GroupBody>
        <Big $w={90}>{big.tool}自定义工具</Big>
        <Big $w={90}>{big.cui}用户界面</Big>
      </GroupBody>
      <GroupName>自定义</GroupName>
    </Group>
    <Group $w={481}>
      <GroupBody>
        <Big $w={64}>{big.load}<span>加载应<br />用程序</span></Big>
        <Big $w={110}>{big.lisp}<span>Visual LISP<br />编辑器</span></Big>
        <Big $w={82}>{big.script}运行脚本</Big>
        <SmallCol $gap={7}>
          <Small>{vba(<path d="M10 3 16 7 10 11Z" fill={c.blue} />)}运行 VBA 宏</Small>
          <Small>{vba(<Pencil x={7} y={0} s={0.6} />)}Visual Basic 编辑器</Small>
          <Small>{vba(<><path d="M1 1H23V4H1Z" fill={c.blue} /><path d="M4 7H9M4 10H9M12 7H20M12 10H20" stroke="#ddd" /></>)}VBA 管理器</Small>
        </SmallCol>
      </GroupBody>
      <GroupName>应用程序</GroupName>
    </Group>
    <Group $w={197}>
      <GroupBody>
        <Big $w={92}>{big.layer}图层转换器</Big>
        <SmallCol $gap={11}>
          <Small>{clip(<Pencil x={14} y={9} s={0.4} col="#f59a23" />)}配置</Small>
          <Small>{clip(<path d="M13 16 17 20 24 11" stroke="#4ccb64" strokeWidth="2" />)}检查</Small>
        </SmallCol>
      </GroupBody>
      <GroupName>CAD 标准</GroupName>
    </Group>
  </Ribbon>
);

const SideMenu = () => (
  <Side>
    {foldsTop.map((f, i) => <Fold key={f} $open={i === 5}>{f}</Fold>)}
    {rooms.map((g, i) => (
      <React.Fragment key={i}>
        {i > 0 && <Rule />}
        {g.map(n => <Item key={n}>{sideIc[n]}{n}</Item>)}
      </React.Fragment>
    ))}
    <Spacer />
    {foldsEnd.map(f => <Fold key={f}>{f}</Fold>)}
  </Side>
);

const Bricks = () => (
  <I w={116} h={88}>
    <g stroke="#fff" strokeWidth="1" shapeRendering="crispEdges">
      <path d="M0 11.500H116" strokeWidth="2" strokeDasharray="15 1" />
      {[0, 1, 2].map(r => {
        const y = 13 + r * 21;
        return <g key={r}>
          <path d={`M0 ${y + 0.5}H116M0 ${y + 9.5}H116M0 ${y + 11.5}H116M0 ${y + 19.5}H116`} />
          {[26, 58, 90].map(x => <path key={x} d={`M${x - 0.5} ${y}V${y + 9}M${x + 1.5} ${y}V${y + 9}`} />)}
          {[0, 16, 32, 49, 65, 81, 98, 113].map(x => <path key={x} d={`M${x + 0.5} ${y + 11}V${y + 19}M${x + 2.5} ${y + 11}V${y + 19}`} />)}
        </g>;
      })}
    </g>
  </I>
);

const Spinner = ({ id, value }: { id: string; value: string }) => (
  <Spin>
    <Box id={id} defaultValue={value} />
    <div>
      <button aria-label="增加"><I w={10} h={5}><path d="M0 5H10L5 0Z" fill="#000" /></I></button>
      <button aria-label="减少"><I w={10} h={5}><path d="M0 0H10L5 5Z" fill="#000" /></I></button>
    </div>
  </Spin>
);

const AreaDialog = () => (
  <Dialog role="dialog" aria-labelledby="dlg">
    <DlgTitle><h2 id="dlg">套内面积</h2><button aria-label="关闭">x</button></DlgTitle>
    <DlgBody>
      <DlgLeft>
        <Check><input type="checkbox" defaultChecked />生成套房对象</Check>
        <Code><Box aria-label="编号" defaultValue="1-A" /></Code>
        <Check $wide><input type="checkbox" defaultChecked />自动识别户墙</Check>
        <Check><input type="checkbox" />面积</Check>
        <Check><input type="checkbox" />单位</Check>
      </DlgLeft>
      <Fill>
        <FillCheck><Check><input type="checkbox" defaultChecked />启用填充</Check></FillCheck>
        <Preview aria-label="填充图案"><Bricks /></Preview>
        <Fields>
          <label htmlFor="scale">比例:</label><Spinner id="scale" value="1" />
          <label htmlFor="angle">转角:</label><Spinner id="angle" value="0" />
          <label htmlFor="color">颜色:</label>
          <ColorPick><i /><select id="color"><option>随块</option></select><Chev col="#555" /></ColorPick>
        </Fields>
      </Fill>
    </DlgBody>
  </Dialog>
);

const Workspace = () => (
  <Center>
    <DocTabs>
      <DocList aria-label="文档列表"><Down w={12} /></DocList>
      <DocTab>
        <I w={20}><path d="M3 0H13L18 5V10H3Z" fill="#8cbdf2" /><path d="M0 9H20V17H0Z" fill="#1b62d0" /><text x="10" y="16" textAnchor="middle" fontSize="8" fontWeight="bold" fill="#fff" fontFamily="Noto Sans">DWG</text></I>
        <span>Drawing1.dwg*</span>
        <button aria-label="关闭文档"><Cross s={14} /></button>
      </DocTab>
      <NewTab aria-label="新建文档"><I w={22} h={17}><path d="M0 0H16L22 5V17H0Z" fill={W} /><path d="M11 4V14M6 9H16" stroke={c.blue} strokeWidth="2" /></I></NewTab>
    </DocTabs>
    <Canvas>
      <Drawing>
        <circle cx="914.5" cy="323.5" r="251.5" /><circle cx="914.5" cy="323.5" r="178" /><circle cx="659" cy="389" r="71" />
        <path d="M663 323.500H1166M914.500 72V575" />
      </Drawing>
      <Ucs width="240" height="250">
        <g shapeRendering="crispEdges"><path d="M5.500 215.500H31.500V241.500H5.500ZM18.500 229.500V69M18.500 229.500H178" /><path d="M7 101 18.500 69 30 101M147 218 178 229.500 147 241" shapeRendering="auto" /></g>
        <text x="5" y="45">Y</text><text x="204" y="245">X</text>
      </Ucs>
      <ViewBar>
        <button>[-]</button><button>[俯视]</button><button>[二维线框]</button><button>[WCS]</button>
        <MdiBtns>
          <button aria-label="最小化"><I w={10}><path d="M0 8H10" stroke={W} strokeWidth="2" /></I></button>
          <button aria-label="还原"><I w={10}><path d="M1 4H7V9H1ZM3 4V1H9V6H7" stroke={W} strokeWidth="1.500" /></I></button>
          <button aria-label="关闭"><Cross s={9} k={3} /></button>
        </MdiBtns>
      </ViewBar>
      <PickBox />
      <AreaDialog />
    </Canvas>
    <LayoutTabs>
      <Arrow aria-label="展开"><I w={14} h={8}><path d="M0 8H14L7 0Z" fill={W} /></I></Arrow>
      {["M2 0V13M11 0V13L4 6.500Z", "M10 0V13L3 6.500Z", "M3 0V13L10 6.500Z", "M11 0V13M2 0V13L9 6.500Z"].map((d, i) => <Arrow key={d} aria-label={`布局导航 ${i + 1}`}><I w={13}><path d={d} fill="#8d949d" stroke="#8d949d" strokeWidth=".7" /></I></Arrow>)}
      <LayoutTab $w={79} $on>模型</LayoutTab><LayoutTab $w={87}>布局1</LayoutTab><LayoutTab $w={48}>+</LayoutTab>
    </LayoutTabs>
    <Command>
      <CommandGrip><button aria-label="关闭命令行"><Cross s={16} k={1} col="#7f8893" /></button></CommandGrip>
      <CommandCol>
        <History>
          <ul>{history.map((h, i) => <Line key={i}>{h.split(" ").map((w, k) => <span key={k}>{w}</span>)}</Line>)}</ul>
          <Scroll $w={16}><Chev up /><Thumb $h={14} $top={60} /><Chev /></Scroll>
        </History>
        <Prompt><label htmlFor="cmd">请选择构成一套房子的所有房间:</label><input id="cmd" /></Prompt>
      </CommandCol>
    </Command>
  </Center>
);

const Calculator = () => (
  <Palette $w={420}>
    <PalTitle $pad={19}><h2>计算器</h2><button aria-label="关闭"><Cross /></button></PalTitle>
    <CalcBody>
      <CalcMain>
        <Tools>{calcTools.map(([n, ic]) => <Tool key={n} aria-label={n}>{ic}</Tool>)}</Tools>
        <Display $h={112} $top={22} aria-label="历史" readOnly />
        <Entry aria-label="表达式" />
        <Head $top={11}>数字键区<span>&lt;&lt;</span></Head>
        <Keys>{numKeys.map(k => <Key key={k} $on={k === "5"}>{k}</Key>)}</Keys>
        <Head $top={19}>科学<span>&lt;&lt;</span></Head>
        <Keys>{sciKeys.map(k => <Key key={k}>{k}</Key>)}</Keys>
        <Head $top={19}>变量<span>&lt;&lt;</span></Head>
        <VarTools>{varIcs.map((ic, i) => <Tool key={i} $flat={i > 0} aria-label={`变量工具 ${i + 1}`}>{ic}</Tool>)}</VarTools>
        <Tree>
          <TreeList>
            <Root><Minus aria-label="折叠" /><I w={24} h={22}><path d="M0 0H9V3H21V18H0Z" fill="#ffe08a" /><path d="M0 4H21V18H0Z" fill="#fcb76c" /><g transform="translate(8 4)"><VarX s={30} /></g></I>变量样例</Root>
            {["Phi", "dee", "ille", "mee", "nee", "rad", "vee"].map((v, i) => <Leaf key={v}><I w={18} h={20}><VarX l={i ? "x" : "k"} s={i ? 32 : 22} /></I><span>{v}</span></Leaf>)}
          </TreeList>
          <Scroll $w={25}><Chev up /><Thumb $h={109} $top={11} /><Chev /></Scroll>
        </Tree>
        <Caption>详细信息</Caption>
        <Display $h={112} aria-label="详细信息" readOnly />
        <Head $top={38}>单位转换<span>&lt;&lt;</span></Head>
        <Units><tbody>{units.map(([a, b]) => <tr key={a}><th scope="row">{a}</th><td>{b}</td></tr>)}</tbody></Units>
      </CalcMain>
      <Scroll $w={15} $top={30}><Chev up /><Thumb $h={224} $top={10} /><Chev /></Scroll>
    </CalcBody>
  </Palette>
);

const Properties = () => (
  <Palette $w={336}>
    <PalTitle $pad={11}><h2>特性</h2><button aria-label="关闭"><Cross /></button></PalTitle>
    <SelRow>
      <SelCombo><select aria-label="选择对象"><option>无选择</option></select></SelCombo>
      <button aria-label="切换 PICKADD"><I w={24}><path d="M5 12H1V1H12V4M5 5H18V18H5ZM21 11H23V23H12V20" stroke="#c8ccd0" /><path d="M11.500 8V15M8 11.500H15" stroke="#e0a94a" strokeWidth="2" /></I></button>
      <button aria-label="选择对象"><I w={24}><circle cx="9" cy="14" r="8" stroke="#c8ccd0" /><path d="M9 0H22V14H9Z" fill={c.blue} /><path d="M17 8V18L19 16 21 20" stroke={W} strokeWidth="1.500" /></I></button>
      <button aria-label="快速选择"><I w={24}><path d="M2 3V15L4 12 6 17M2 3 9 11H5" stroke="#c8ccd0" /><path d="M18 1 9 13H15L12 22 22 9H16Z" fill={c.yellow} /></I></button>
    </SelRow>
    {sections.map(([n, rows]) => (
      <Section key={n}>
        <SecHead>{n}<Down /></SecHead>
        <Props><tbody>{rows.map(([a, b]) => <tr key={a}><th scope="row">{a}</th><td>{b}</td></tr>)}</tbody></Props>
      </Section>
    ))}
  </Palette>
);

const StatusBar = () => (
  <Status>
    <Coords><button>1 : 100<Down w={13} /></button>90023.3, 35288.4, 0.0</Coords>
    {toggles.map(([n, on, ic]) => <Toggle key={n} $on={on} aria-label={n}>{ic}</Toggle>)}
    <Words>{["基线", "填充", "加粗", "编组", "动态标注"].map(w => <Word key={w} $on={w === "编组"}>{w}</Word>)}</Words>
    <Tray>
      <span><I w={24}><path d="M0 2H24M0 23H24M1 6V20M23 1V20" stroke={c.blue} strokeWidth="1.500" /><text x="12" y="18" textAnchor="middle" fontSize="14" fill={c.blue} fontFamily="Noto Sans">0.0</text></I>毫米</span>
      <Down />
      <span><Person />1:1</span>
      <Down />
      <Person dot /><Person />
      <I w={24}><path d="M1 6H12V17H1Z" stroke="#ddd" strokeWidth="1.500" /><circle cx="17" cy="5" r="4.500" stroke="#ddd" strokeWidth="1.500" /><path d="M15 12 20 17 15 22 10 17Z" fill={c.chrome} stroke="#ddd" strokeWidth="1.500" /></I>
      <I w={24}><Gear x={12} y={12} r={11} col={c.blue} hole={c.chrome} /></I>
      <I w={24}><path d="M3 5H21V19H3Z" stroke={c.blue} strokeWidth="2" /><path d="M7 1V5M10 1V5M14 1V5M17 1V5M7 19V23M10 19V23M14 19V23M17 19V23" stroke={c.blue} strokeWidth="1.500" /><path d="M14 6 8 13H12L10 18 16 11H12Z" fill={c.yellow} /></I>
      <I w={24}><path d="M2 8V2H8M16 2H22V8M22 16V22H16M8 22H2V16M2 2 9 9M22 2 15 9M2 22 9 15M22 22 15 15" stroke={W} strokeWidth="2" /></I>
      <I w={20} h={24}><path d="M0 2H20M0 12H20M0 22H20" stroke={c.blue} strokeWidth="3" /></I>
    </Tray>
    <Stamp><span>有</span><span>趣</span><span>论</span><span>坛</span></Stamp>
  </Status>
);

export default function App() {
  return (
    <App_ lang="zh-CN">
      <Global />
      <TopBar />
      <RibbonBar />
      <Body>
        <SideMenu />
        <Workspace />
        <Calculator />
        <Properties />
      </Body>
      <StatusBar />
    </App_>
  );
}
